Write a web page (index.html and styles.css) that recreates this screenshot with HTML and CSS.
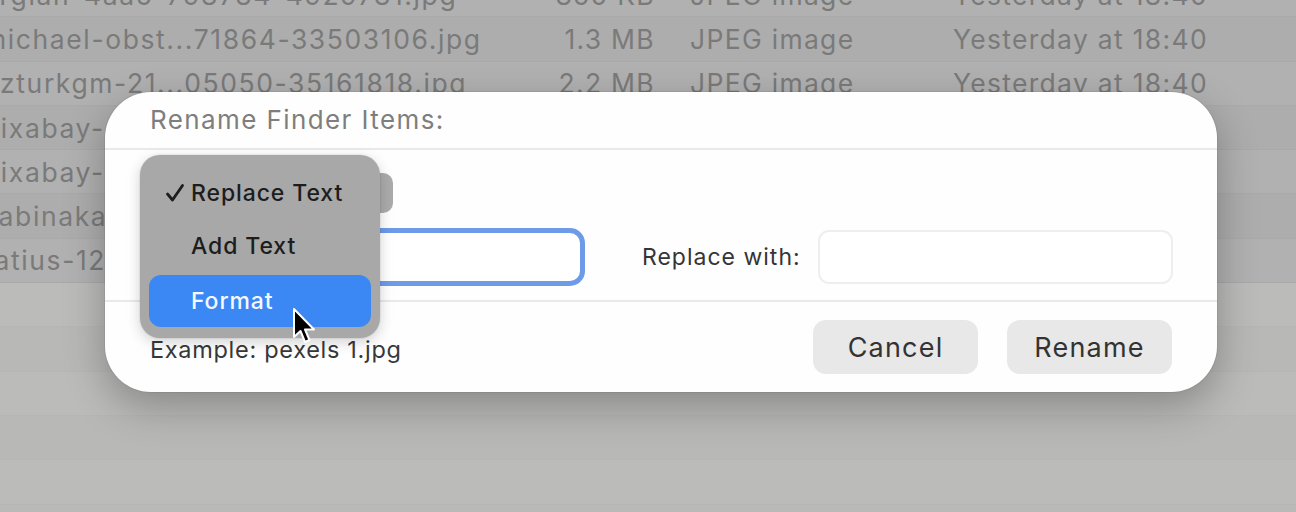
FILE: index.html
```html
<!DOCTYPE html>
<html>
<head>
<meta charset="utf-8">
<link rel="stylesheet" href="styles.css">
</head>
<body>
<div class="finder">
  <div class="row"><span class="name">argian-4aa5-798784-4929781.jpg</span><span class="size">850 KB</span><span class="kind">JPEG image</span><span class="date">Yesterday at 18:40</span></div>
  <div class="row alt"><span class="name">michael-obst...71864-33503106.jpg</span><span class="size">1.3 MB</span><span class="kind">JPEG image</span><span class="date">Yesterday at 18:40</span></div>
  <div class="row"><span class="name">ozturkgm-21...05050-35161818.jpg</span><span class="size">2.2 MB</span><span class="kind">JPEG image</span><span class="date">Yesterday at 18:40</span></div>
  <div class="row alt"><span class="name">pixabay-46735.jpg</span><span class="size">1.1 MB</span><span class="kind">JPEG image</span><span class="date">Yesterday at 18:40</span></div>
  <div class="row"><span class="name">pixabay-33545.jpg</span><span class="size">1.8 MB</span><span class="kind">JPEG image</span><span class="date">Yesterday at 18:40</span></div>
  <div class="row alt"><span class="name">sabinakamalova-2837.jpg</span><span class="size">960 KB</span><span class="kind">JPEG image</span><span class="date">Yesterday at 18:40</span></div>
  <div class="row"><span class="name">ratius-1234567.jpg</span><span class="size">2.4 MB</span><span class="kind">JPEG image</span><span class="date">Yesterday at 18:40</span></div>
  <div class="row empty"></div>
  <div class="row empty alt"></div>
  <div class="row empty"></div>
  <div class="row empty alt"></div>
  <div class="row empty"></div>
</div>

<div class="dialog">
  <div class="dlg-head">Rename Finder Items:</div>
  <div class="dlg-body">
    <div class="col-left">
      <div class="popup"></div>
      <div class="field focus"></div>
    </div>
    <div class="replace">
      <span class="label">Replace with:</span>
      <div class="field plain"></div>
    </div>
  </div>
  <div class="dlg-foot">
    <span class="example">Example: pexels 1.jpg</span>
    <div class="buttons">
      <button class="btn">Cancel</button>
      <button class="btn">Rename</button>
    </div>
  </div>

  <div class="menu">
    <div class="item">
      <svg class="check" width="22" height="22" viewBox="0 0 22 22"><path d="M3.5 12 L8.5 18 L18.5 3.5" fill="none" stroke="#1d1d1d" stroke-width="2.8" stroke-linecap="round" stroke-linejoin="round"/></svg>
      Replace Text
    </div>
    <div class="item">Add Text</div>
    <div class="item active">Format</div>
  </div>
</div>

<svg class="cursor" width="28" height="40" viewBox="0 0 28 40">
  <path d="M2 2 L2 30 L8.5 24 L13 35 L17.5 33 L13 22.5 L22 22.5 Z" fill="#000" stroke="#fff" stroke-width="2" stroke-linejoin="round"/>
</svg>
</body>
</html>
```

FILE: styles.css
```css
* { box-sizing: border-box; }
html, body {
  margin: 0;
  padding: 0;
  width: 1296px;
  height: 512px;
  overflow: hidden;
  background: #b9bab8;
  font-family: "Inter", "Liberation Sans", sans-serif;
}

.finder {
  margin-top: -27px;
  display: flex;
  flex-direction: column;
}

.row {
  height: 44.3px;
  display: grid;
  grid-template-columns: 520px 135px 263px 300px;
  align-items: center;
  background: #b1b1b1;
  color: #7a7a7a;
  font-size: 26.5px;
  letter-spacing: 1.3px;
  border-bottom: 1px solid #a9a9a9;
}
.row.alt { background: #adadad; }
.row.empty { background: #bbbcba; border-bottom: 1px solid #b6b7b5; }
.row.empty.alt { background: #b8b9b7; }

.name {
  margin-left: -17px;
  letter-spacing: 1.6px;
  white-space: nowrap;
  overflow: hidden;
}
.size { text-align: right; white-space: nowrap; }
.kind { padding-left: 35px; white-space: nowrap; }
.date { padding-left: 35px; white-space: nowrap; }

.dialog {
  position: absolute;
  left: 105px;
  top: 92px;
  width: 1112px;
  height: 300px;
  background: #fefefe;
  border-radius: 46px;
  box-shadow: 0 14px 40px rgba(0,0,0,0.28), 0 0 0 1px rgba(0,0,0,0.06);
  display: flex;
  flex-direction: column;
}

.dlg-head {
  height: 58px;
  padding: 12px 0 0 45px;
  font-size: 26px;
  letter-spacing: 1.4px;
  color: #7e7e7e;
  border-bottom: 2px solid #e9e9e9;
}

.dlg-body {
  height: 152px;
  display: flex;
  padding: 23px 44px 0 45px;
  border-bottom: 2px solid #e9e9e9;
  gap: 57px;
}

.col-left {
  width: 435px;
  display: flex;
  flex-direction: column;
  gap: 15px;
}

.popup {
  width: 243px;
  height: 40px;
  border-radius: 10px;
  background: #ababab;
}

.field {
  height: 58px;
  border-radius: 15px;
  background: #fff;
}
.field.focus {
  border: 5px solid #6d9be8;
}

.replace {
  flex: 1;
  display: flex;
  align-items: center;
  gap: 17px;
  height: 54px;
  margin-top: 57px;
}
.label {
  font-size: 23px;
  letter-spacing: 1px;
  color: #353535;
  white-space: nowrap;
}
.field.plain {
  flex: 1;
  height: 54px;
  border: 2px solid #eeeeee;
  border-radius: 11px;
}

.dlg-foot {
  flex: 1;
  display: flex;
  align-items: center;
  justify-content: space-between;
  padding: 0 45px 0 45px;
}
.example {
  font-size: 23.5px;
  letter-spacing: 0.7px;
  color: #383838;
  padding-top: 4px;
}
.buttons {
  display: flex;
  gap: 29px;
}
.btn {
  width: 165px;
  height: 54px;
  border: none;
  border-radius: 13px;
  background: #e8e8e8;
  font-family: inherit;
  font-size: 27px;
  letter-spacing: 1.2px;
  color: #333;
  padding: 0;
}

.menu {
  position: absolute;
  left: 35px;
  top: 63px;
  width: 240px;
  height: 183px;
  background: #a8a8a8;
  border-radius: 20px;
  box-shadow: 0 4px 14px rgba(0,0,0,0.18), 0 0 0 1px rgba(0,0,0,0.05);
  padding: 11px 9px;
  display: flex;
  flex-direction: column;
}
.item {
  height: 54px;
  display: flex;
  align-items: center;
  padding-left: 42px;
  font-size: 23px;
  letter-spacing: 0.9px;
  font-weight: 500;
  color: #1d1d1d;
  position: relative;
  border-radius: 12px;
}
.check {
  position: absolute;
  left: 15px;
  top: 16px;
}
.item.active {
  background: #3b87f4;
  color: #f4f8ff;
  margin-top: 2px;
  height: 53px;
}

.cursor {
  position: absolute;
  left: 292px;
  top: 307px;
}
```
